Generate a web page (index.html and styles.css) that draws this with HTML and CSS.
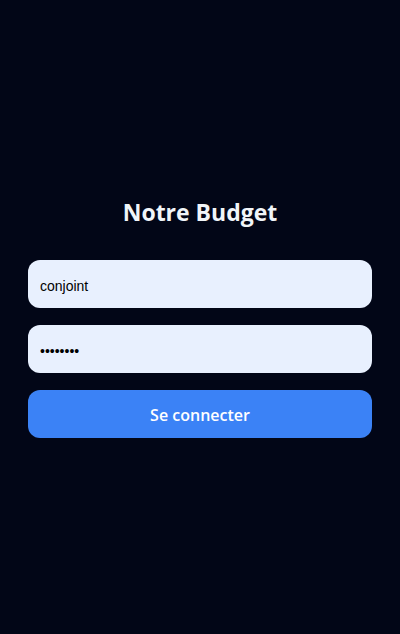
FILE: index.html
```html
<!DOCTYPE html>
<html lang="fr">
<head>
<meta charset="utf-8">
<link rel="stylesheet" href="styles.css">
</head>
<body>
<main class="page">
  <form class="login">
    <h1 class="title">Notre Budget</h1>
    <input class="field" type="text" value="conjoint">
    <input class="field" type="password" value="12345678">
    <button class="btn" type="button">Se connecter</button>
  </form>
</main>
</body>
</html>
```
FILE: styles.css
```css
html, body { margin: 0; height: 100%; }
body { background: #020617; font-family: "Open Sans", sans-serif; }
.page { height: 100%; display: flex; align-items: center; justify-content: center; padding: 0 28px; box-sizing: border-box; }
.login { width: 100%; display: flex; flex-direction: column; gap: 17px; }
.title { margin: 0 0 15px; text-align: center; color: #f1f5f9; font-size: 23px; font-weight: 700; line-height: 32px; }
.field { height: 48px; box-sizing: border-box; border: none; border-radius: 12px; background: #e8f0fe; padding: 3px 12px 0; font-family: "Liberation Sans", Arial, sans-serif; font-size: 14px; color: #000; outline: none; }
.btn { height: 48px; border: none; border-radius: 12px; background: #3b82f6; color: #fff; padding-top: 3px; font-family: "Open Sans", sans-serif; font-size: 16px; font-weight: 600; }
```
